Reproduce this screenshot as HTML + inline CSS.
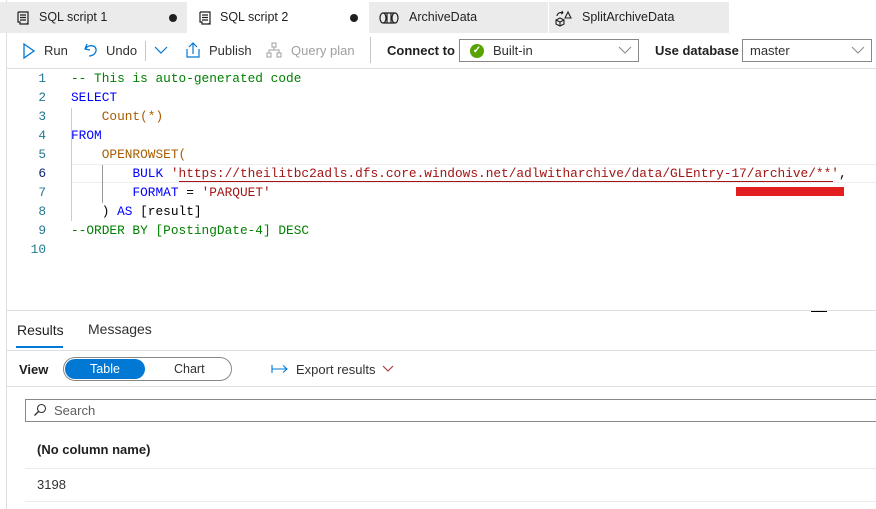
<!DOCTYPE html>
<html><head><meta charset="utf-8"><style>
*{margin:0;padding:0;box-sizing:border-box}
body{width:876px;height:509px;overflow:hidden;background:#fff;font-family:"Liberation Sans",sans-serif;color:#323130;position:relative;font-size:13px}
.a{position:absolute;white-space:nowrap}
.tab{position:absolute;top:2px;height:31px;background:#ebebeb;font-size:12.5px;line-height:31px;color:#201f1f}
.dot{position:absolute;top:12px;width:8px;height:8px;border-radius:50%;background:#201f1f}
.code{position:absolute;left:71px;font-family:"Liberation Mono",monospace;font-size:12.8px;line-height:19px;white-space:pre;color:#000}
.ln{position:absolute;left:0;width:46px;text-align:right;font-family:"Liberation Mono",monospace;font-size:12.8px;color:#237893;line-height:19px}
.g{color:#008000}.b{color:#0000ff}.o{color:#a85d00}.r{color:#a31515}
.hl{position:absolute;left:71px;right:0;height:19px;border-top:1px solid #eee;border-bottom:1px solid #eee}
.hr{position:absolute;left:6px;right:0;height:1px;background:#e1dfdd}
</style></head><body>
<div class="a" style="left:6px;top:0;width:1px;height:509px;background:#e1dfdd"></div>
<!-- tabs -->
<div class="tab" style="left:0;width:187px"><svg class="a" style="left:15px;top:8px" width="16" height="16"><path d="M3 2h10v11M3 2v10h2v2h8v-1M5 5h6M5 7.5h6M5 10h6M11 14a2 2 0 0 0 2-2" fill="none" stroke="#201f1f" stroke-width="1.2"/></svg><span class="a" style="left:39px">SQL script 1</span><div class="dot" style="left:169px"></div></div>
<div class="tab" style="left:188px;width:180px;background:#fff"><svg class="a" style="left:9px;top:8px" width="16" height="16"><path d="M3 2h10v11M3 2v10h2v2h8v-1M5 5h6M5 7.5h6M5 10h6M11 14a2 2 0 0 0 2-2" fill="none" stroke="#201f1f" stroke-width="1.2"/></svg><span class="a" style="left:32px">SQL script 2</span><div class="dot" style="left:162px"></div></div>
<div class="tab" style="left:369px;width:179px"><svg class="a" style="left:10px;top:10px" width="20" height="12"><path d="M4 1h12M4 11h12M4 1a3 5 0 0 0 0 10a3 5 0 0 0 0-10M16 1a3 5 0 0 1 0 10a3 5 0 0 1 0-10M8 1v10M12 1v10" fill="none" stroke="#201f1f" stroke-width="1.2"/></svg><span class="a" style="left:40px">ArchiveData</span></div>
<div class="tab" style="left:549px;width:180px"><svg class="a" style="left:5px;top:8px" width="18" height="17"><path d="M2 10l4-2 4 2v4l-4 2-4-2zM2 10l4 2 4-2M6 12v4M11 8l3-6 3 6zM3 6a4 4 0 0 1 6-3M9 3l-1-2M9 3l-2 1" fill="none" stroke="#201f1f" stroke-width="1.1"/></svg><span class="a" style="left:33px">SplitArchiveData</span></div>
<!-- toolbar -->
<svg class="a" style="left:22px;top:43px" width="14" height="16"><path d="M2 1 L12 8 L2 15 Z" fill="none" stroke="#0078d4" stroke-width="1.3"/></svg>
<span class="a" style="left:44px;top:43px">Run</span>
<svg class="a" style="left:83px;top:42px" width="16" height="16"><path d="M4 2 L2 7 L7 8 M2.5 6.5 C6 2 14 3 13 9 C12 13 8 14 6 14" fill="none" stroke="#0078d4" stroke-width="1.3"/></svg>
<span class="a" style="left:106px;top:43px">Undo</span>
<div class="a" style="left:145px;top:41px;width:1px;height:20px;background:#c8c6c4"></div>
<svg class="a" style="left:154px;top:46px" width="14" height="9"><path d="M1 1 L7 7 L13 1" fill="none" stroke="#0078d4" stroke-width="1.2"/></svg>
<svg class="a" style="left:184px;top:41px" width="18" height="18"><path d="M9 13 V2 M5 6 L9 2 L13 6 M3 8 V16 H15 V8" fill="none" stroke="#0078d4" stroke-width="1.2"/></svg>
<span class="a" style="left:209px;top:43px">Publish</span>
<svg class="a" style="left:266px;top:42px" width="16" height="16"><path d="M6 1h4v4H6zM1 11h4v4H1zM11 11h4v4h-4zM8 5v3M3 11V8h10v3" fill="none" stroke="#a19f9d" stroke-width="1"/></svg>
<span class="a" style="left:291px;top:43px;color:#a19f9d">Query plan</span>
<div class="a" style="left:370px;top:37px;width:1px;height:26px;background:#c8c6c4"></div>
<span class="a" style="left:387px;top:43px;font-weight:bold;color:#201f1f">Connect to</span>
<div class="a" style="left:459px;top:39px;width:180px;height:23px;border:1px solid #8a8886"></div>
<div class="a" style="left:470px;top:44px;width:14px;height:14px;border-radius:50%;background:#57a300;color:#fff;font-size:10px;line-height:14px;text-align:center;font-weight:bold">✓</div>
<span class="a" style="left:493px;top:43px">Built-in</span>
<svg class="a" style="left:618px;top:46px" width="14" height="8"><path d="M1 1 L7 7 L13 1" fill="none" stroke="#8a8886"/></svg>
<span class="a" style="left:655px;top:43px;font-weight:bold;color:#201f1f">Use database</span>
<div class="a" style="left:742px;top:39px;width:130px;height:23px;border:1px solid #8a8886"></div>
<span class="a" style="left:750px;top:43px">master</span>
<svg class="a" style="left:851px;top:46px" width="14" height="8"><path d="M1 1 L7 7 L13 1" fill="none" stroke="#8a8886"/></svg>
<div class="hr" style="top:68px"></div>
<!-- editor -->
<div class="hl" style="top:164px"></div>
<div class="a" style="left:71px;top:127px;width:1px;height:94px;background:#ccc"></div>
<div class="a" style="left:71px;top:108px;width:1px;height:19px;background:#ccc"></div>
<div class="a" style="left:102px;top:165px;width:1px;height:38px;background:#999"></div>
<div class="ln" style="top:69px">1<br>2<br>3<br>4<br>5<br><span style="color:#0b216f">6</span><br>7<br>8<br>9<br>10</div>
<div class="code" style="top:69px"><span class="g">-- This is auto-generated code</span>
<span class="b">SELECT</span>
    <span class="o">Count(*)</span>
<span class="b">FROM</span>
    <span class="o">OPENROWSET(</span>
        <span class="b">BULK</span> <span class="r">'https://theilitbc2adls.dfs.core.windows.net/adlwitharchive/data/GLEntry-17/archive/**'</span>,
        <span class="b">FORMAT</span> = <span class="r">'PARQUET'</span>
    ) <span class="b">AS</span> [result]
<span class="g">--ORDER BY [PostingDate-4] DESC</span>
</div>
<div class="a" style="left:179px;top:181px;width:654px;height:1px;background:#a31515"></div>
<div class="a" style="left:736px;top:187px;width:108px;height:9px;background:#e31e1e"></div>
<div class="a" style="left:811px;top:310px;width:16px;height:2px;background:#000"></div>
<div class="hr" style="top:310px"></div>
<!-- results -->
<span class="a" style="left:17px;top:322px;font-size:14px;color:#201f1f">Results</span>
<div class="a" style="left:16px;top:346px;width:47px;height:2px;background:#0078d4"></div>
<span class="a" style="left:88px;top:321px;font-size:14px">Messages</span>
<div class="hr" style="top:350px"></div>
<span class="a" style="left:19px;top:362px;font-weight:bold;color:#201f1f">View</span>
<div class="a" style="left:63px;top:357px;width:169px;height:24px;border:1px solid #8a8886;border-radius:12px"></div>
<div class="a" style="left:65px;top:359px;width:80px;height:20px;border-radius:10px;background:#0078d4;color:#fff;font-size:12.5px;text-align:center;line-height:20px">Table</div>
<span class="a" style="left:174px;top:362px;font-size:12.5px">Chart</span>
<svg class="a" style="left:271px;top:364px" width="18" height="10"><path d="M1 1v8M1 5h15M12 1.5l4 3.5-4 3.5" fill="none" stroke="#0078d4" stroke-width="1.1"/></svg>
<span class="a" style="left:296px;top:362px">Export results</span>
<svg class="a" style="left:382px;top:365px" width="12" height="8"><path d="M1 1 L6 6 L11 1" fill="none" stroke="#a33" stroke-width="1.1"/></svg>
<div class="hr" style="top:386px"></div>
<div class="a" style="left:25px;top:399px;width:860px;height:23px;border:1px solid #8a8886"></div>
<svg class="a" style="left:33px;top:403px" width="14" height="14"><circle cx="8.5" cy="5.5" r="4" fill="none" stroke="#323130" stroke-width="1.1"/><path d="M5.5 8.5 L1.5 12.5" stroke="#323130" stroke-width="1.3"/></svg>
<span class="a" style="left:54px;top:403px;color:#605e5c">Search</span>
<span class="a" style="left:37px;top:442px;font-weight:bold;color:#201f1f">(No column name)</span>
<div class="a" style="left:25px;top:468px;right:0;height:1px;background:#edebe9"></div>
<span class="a" style="left:37px;top:477px">3198</span>
<div class="a" style="left:25px;top:501px;right:0;height:1px;background:#edebe9"></div>
</body></html>
